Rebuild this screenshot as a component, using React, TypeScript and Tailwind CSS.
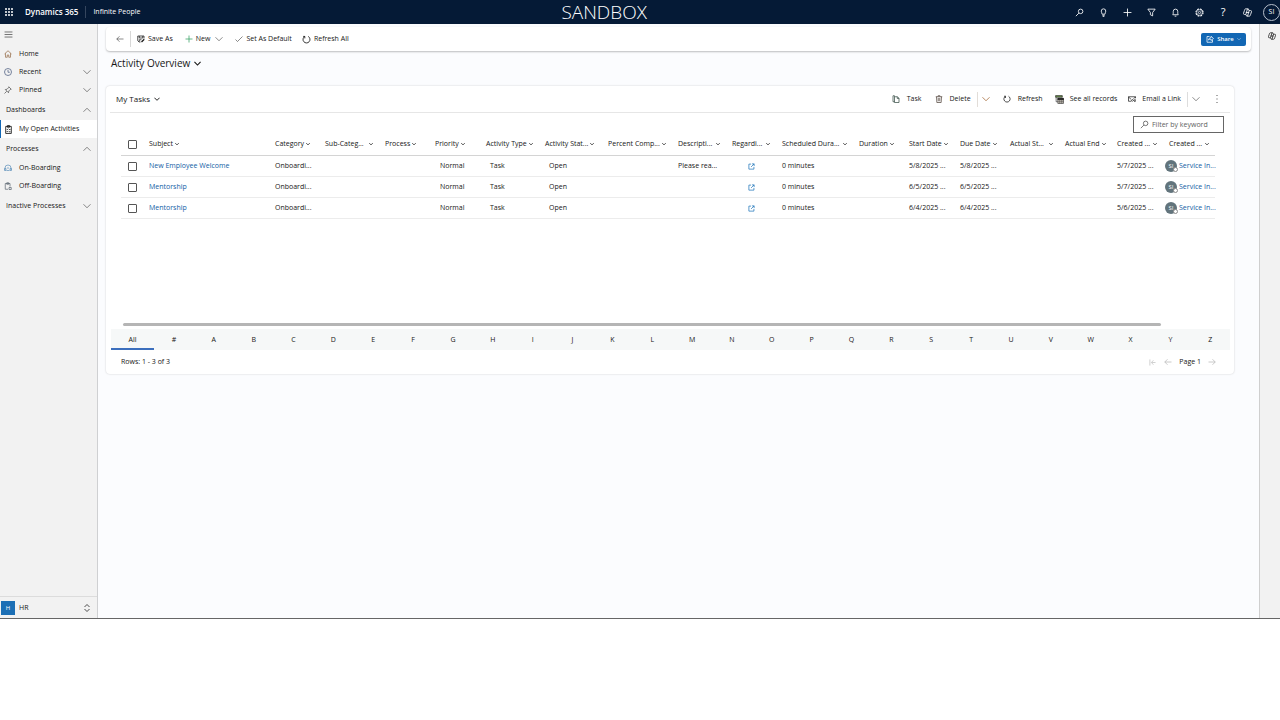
import React from 'react';

const icons: Record<string, string> = {
  search: 'M10 2a4 4 0 1 1 0 8a4 4 0 0 1 0-8M7 9l-5.500 5.500',
  bulb: 'M5.500 11C5.500 9 4 8 4 5.500a4 4 0 0 1 8 0C12 8 10.500 9 10.500 11zM6 13h4M6.500 15h3',
  plus: 'M8 1v14M1 8h14',
  filter: 'M1.500 2h13L10 8v6l-4-2V8z',
  bell: 'M3 12c1-1 1-2 1-6a4 4 0 0 1 8 0c0 4 0 5 1 6zM6.500 14.500h3',
  copilot: 'M5 1.500h4.500l1.500 3.500M5 1.500c-1.500 0-2 1-2.500 3L1 9c-.5 1.500 0 2.500 1.500 2.500H5L8 1.500M11 14.500H6.500L5 11.500M11 14.500c1.500 0 2-1 2.500-3L15 7c.5-1.500 0-2.500-1.500-2.500H11L8 14.500M5 8h6',
  back: 'M15 8H1.500M7 2.500L1.500 8L7 13.500',
  forward: 'M1 8h13.500M9 2.500L14.500 8L9 13.500',
  first: 'M2 1v14M15 8H6M10 3L5.500 8L10 13',
  check: 'M1 9l4 4L15 3',
  refresh: 'M5 2.500A6.200 6.200 0 1 0 11 2.500M5 2.500H2M5 2.500v3.500',
  down: 'M1 4.500l7 7l7-7',
  up: 'M1 11.500l7-7l7 7',
  menu: 'M1 3.500h14M1 8h14M1 12.500h14',
  home: 'M1 8L8 1.500L15 8M3 6.500V14.500h3.500V10h3v4.500H13V6.500',
  clock: 'M8 1a7 7 0 1 1 0 14A7 7 0 0 1 8 1M8 4v4.500h3.500',
  pin: 'M9.500 1.500l5 5l-2 .5l-3 3l-.5 3.500l-6.500-6.500L6 6.500l3-3zM5.500 10.500L1 15',
  clipboard: 'M3 2.500h10v12.500H3zM6 1h4v3H6zM5 7.500l1 1l1.500-2M9 8h2.500M5 11.500l1 1l1.500-2M9 12h2.500',
  board: 'M2 12V8a6 6 0 0 1 12 0v4M1 9h3v4H1zM12 9h3v4h-3zM5 13h6M6 8h4',
  offboard: 'M8 14.500H2.500V3H12v6M5.500 1.500h4v3h-4zM10 11h4.500v4H10z',
  trash: 'M1.500 3.500h13M6 3.500V1.500h4v2M3 3.500l.7 11.500h8.600L13 3.500M6.500 6v6.500M9.500 6v6.500',
  copy: 'M5 3.500V1.500H2v12h3M5 3.500h6l3 3V15H5zM10.500 3.500v3.500H14',
  popup: 'M7 2.500H2v11.500h11.500V9M9 2h5v5M14 2L7 9',
  share: 'M7 3H2v11.500h11V10M5 10c.5-3 2-4.500 5-4.500V2.500L15 7l-5 4V8.500c-2 0-3.500 0-5 1.500',
  sort: 'M3 6l5-5l5 5M3 10l5 5l5-5',
};

interface IconProps {
  name: string;
  className?: string;
  stroke?: number;
}

const Icon: React.FC<IconProps> = ({ name, className = 'size-2', stroke = 1.5 }) => (
  <svg viewBox="0 0 16 16" fill="none" stroke="currentColor" strokeWidth={stroke} className={`shrink-0 ${className}`} aria-hidden="true">
    <path d={icons[name]} />
  </svg>
);

const SaveIcon = () => (
  <svg viewBox="0 0 16 16" fill="none" stroke="currentColor" strokeWidth="1.500" className="size-2 shrink-0" aria-hidden="true">
    <path d="M7 14H4l-2.500-2.500V2H14v5M4.500 2v4h7V2M4.500 13V9.500H9" />
    <path d="M9 14l5.500-5.500" strokeWidth="2.500" />
  </svg>
);

const RecordsIcon = () => (
  <svg viewBox="0 0 16 16" fill="none" stroke="currentColor" strokeWidth="1" className="size-[9px] shrink-0" aria-hidden="true">
    <path d="M1 1h12v3H1z" fill="#6b8e4e" />
    <path d="M2 4v8h3" />
    <path d="M5 6h10v9H5z" fill="#e4ddd2" />
    <path d="M5 6h10v2.500H5z" fill="currentColor" />
    <path d="M5 12h10M8.500 8v7M12 8v7" strokeWidth="0.800" />
  </svg>
);

const MailIcon = () => (
  <svg viewBox="0 0 16 16" fill="none" stroke="currentColor" strokeWidth="1.400" className="size-2 shrink-0" aria-hidden="true">
    <path d="M6 12.500H1v-9h14v3M1 4l5 4.500M15 4l-4 3M9 13a1.800 1.800 0 0 1 0-4h1.500M12.500 9h1a1.800 1.800 0 0 1 0 4h-1.500M9.500 11h4" />
  </svg>
);

const GearIcon = () => (
  <svg viewBox="0 0 16 16" fill="none" stroke="currentColor" className="size-[9px]" aria-hidden="true">
    <circle cx="8" cy="8" r="6.300" strokeWidth="2" strokeDasharray="3.300 1.650" />
    <circle cx="8" cy="8" r="5" strokeWidth="1" />
    <circle cx="8" cy="8" r="2" strokeWidth="1.300" />
  </svg>
);

const topActions = [
  { label: 'Search', icon: 'search' },
  { label: 'Ideas', icon: 'bulb' },
  { label: 'Quick create', icon: 'plus' },
  { label: 'Advanced find', icon: 'filter' },
  { label: 'Notifications', icon: 'bell' },
  { label: 'Settings', icon: 'gear' },
  { label: 'Help', icon: 'help' },
  { label: 'Copilot', icon: 'copilot' },
];

const columns = [
  { label: 'Subject', width: 126 },
  { label: 'Category', width: 50 },
  { label: 'Sub-Categ...', width: 60, spread: true },
  { label: 'Process', width: 50 },
  { label: 'Priority', width: 51 },
  { label: 'Activity Type', width: 59 },
  { label: 'Activity Stat...', width: 63 },
  { label: 'Percent Comp...', width: 70, spread: true },
  { label: 'Descripti...', width: 54, spread: true },
  { label: 'Regardi...', width: 50, spread: true },
  { label: 'Scheduled Dura...', width: 77, spread: true },
  { label: 'Duration', width: 50 },
  { label: 'Start Date', width: 51 },
  { label: 'Due Date', width: 50 },
  { label: 'Actual St...', width: 55, spread: true },
  { label: 'Actual End', width: 52 },
  { label: 'Created ...', width: 52, spread: true },
  { label: 'Created ...', width: 52, spread: true },
];

const rows = [
  { subject: 'New Employee Welcome', description: 'Please rea...', date: '5/8/2025 ...', created: '5/7/2025 ...' },
  { subject: 'Mentorship', description: '', date: '6/5/2025 ...', created: '5/7/2025 ...' },
  { subject: 'Mentorship', description: '', date: '6/4/2025 ...', created: '5/6/2025 ...' },
];

const TopBar = () => (
  <header className="grid h-6 grid-cols-[47fr_auto_53fr] items-center bg-[#051a36] text-white">
    <div className="flex items-center">
      <button aria-label="App launcher" className="ml-1 flex w-[11px] justify-center">
        <svg viewBox="0 0 9 9" fill="currentColor" className="size-[9px]">
          {[1, 4, 7].map((y) => [1, 4, 7].map((x) => <rect key={`${x}${y}`} x={x - 1} y={y - 1} width="2" height="2" rx="1" />))}
        </svg>
      </button>
      <span className="ml-[10px] text-[8px] font-semibold">Dynamics 365</span>
      <span className="mx-[7px] h-3 w-px bg-[#35465e]" />
      <span className="text-[7px]">Infinite People</span>
    </div>
    <div className="text-[19px] font-light">SANDBOX</div>
    <div className="flex items-center justify-end">
      {topActions.map(({ label, icon }) => (
        <button key={label} aria-label={label} className="flex w-6 justify-center">
          {icon === 'gear' ? <GearIcon /> : icon === 'help' ? <span className="text-[11px]">?</span> : <Icon name={icon} className="size-[9px]" />}
        </button>
      ))}
      <button className="ml-1 flex size-[17px] items-center justify-center rounded-full border border-[#b8c0cc] text-[7px]">SI</button>
    </div>
  </header>
);

interface NavItemProps {
  label: string;
  icon: string;
  color?: string;
  expand?: boolean;
}

const NavItem: React.FC<NavItemProps> = ({ label, icon, color = 'text-[#555]', expand }) => (
  <button className="flex h-[18px] w-full items-center pl-1 pr-[6px]">
    <Icon name={icon} className={`size-2 ${color}`} />
    <span className="ml-[7px] flex-1 text-left">{label}</span>
    {expand && <Icon name="down" className="size-2" stroke={1} />}
  </button>
);

const NavGroup = ({ label, open }: { label: string; open?: boolean }) => (
  <button className="flex h-[21px] w-full items-center justify-between pl-[6px] pr-[6px]">
    {label}
    <Icon name={open ? 'up' : 'down'} stroke={1} />
  </button>
);

const Sidebar = () => (
  <nav className="flex w-[98px] shrink-0 flex-col border-r border-[#cfd0d2] bg-[#f2f2f2]">
    <button aria-label="Collapse menu" className="flex h-[21px] items-center pl-1">
      <Icon name="menu" className="size-[9px]" stroke={1} />
    </button>
    <NavItem label="Home" icon="home" color="text-[#9a7350]" />
    <NavItem label="Recent" icon="clock" color="text-[#4d5f80]" expand />
    <NavItem label="Pinned" icon="pin" expand />
    <NavGroup label="Dashboards" open />
    <a href="#activities" className="flex h-[18px] items-center border-l border-[#1267b4] bg-white pl-[3px]">
      <Icon name="clipboard" className="size-[9px]" />
      <span className="ml-[6px]">My Open Activities</span>
    </a>
    <NavGroup label="Processes" open />
    <NavItem label="On-Boarding" icon="board" color="text-[#6596bd]" />
    <NavItem label="Off-Boarding" icon="offboard" color="text-[#626b75]" />
    <NavGroup label="Inactive Processes" />
    <button className="mt-auto flex h-[22px] items-center border-t border-[#dcdcdc] pl-px pr-[6px]">
      <span className="flex size-[14px] items-center justify-center bg-[#1c6fb5] text-[6px] text-white">H</span>
      <span className="ml-1 flex-1 text-left">HR</span>
      <Icon name="sort" />
    </button>
  </nav>
);

const CommandBar = () => (
  <div className="mt-[3px] mr-2 flex h-6 items-center rounded-sm bg-white shadow-[0_1px_2px_rgba(0,0,0,0.250)]">
    <button aria-label="Back" className="ml-[10px]"><Icon name="back" stroke={1} /></button>
    <span className="mx-[6px] h-4 w-px bg-[#d8d8d8]" />
    <button className="flex items-center gap-[3px]"><SaveIcon />Save As</button>
    <button className="ml-3 flex items-center gap-[3px]">
      <Icon name="plus" className="size-2 text-[#37a063]" />New
      <Icon name="down" className="ml-[2px] size-2" stroke={1} />
    </button>
    <button className="ml-3 flex items-center gap-[3px]"><Icon name="check" stroke={1} />Set As Default</button>
    <button className="ml-[10px] flex items-center gap-[3px]"><Icon name="refresh" className="size-[9px]" />Refresh All</button>
    <button className="ml-auto mr-[5px] flex h-[13px] w-[45px] items-center justify-center gap-[3px] rounded-xs bg-[#1267b4] text-[6px] font-semibold text-white">
      <Icon name="share" />Share<Icon name="down" className="size-1" />
    </button>
  </div>
);

const GridToolbar = () => (
  <div className="mx-1 flex h-[27px] items-center border-b border-[#e6e6e6]">
    <button className="ml-[6px] flex items-center gap-1 text-[8px]">
      My Tasks <Icon name="down" className="size-[6px]" stroke={2.5} />
    </button>
    <button className="ml-auto flex items-center gap-[7px]"><Icon name="copy" className="size-2 text-[#3b5249]" />Task</button>
    <button className="ml-[13px] flex items-center gap-[7px]"><Icon name="trash" className="size-2 text-[#554a40]" />Delete</button>
    <span className="ml-[6px] h-[15px] w-px bg-[#e2ddd8]" />
    <button aria-label="More delete options" className="ml-1"><Icon name="down" className="size-2 text-[#a0622d]" /></button>
    <button className="ml-[13px] flex items-center gap-[7px]"><Icon name="refresh" />Refresh</button>
    <button className="ml-3 flex items-center gap-[6px]"><RecordsIcon />See all records</button>
    <button className="ml-[11px] flex items-center gap-[6px]"><MailIcon />Email a Link</button>
    <span className="ml-[6px] h-[15px] w-px bg-[#ddd]" />
    <button aria-label="More link options" className="ml-1"><Icon name="down" stroke={1} /></button>
    <button aria-label="More commands" className="ml-[15px] mr-[11px]">
      <svg viewBox="0 0 4 10" fill="#555" className="h-[10px] w-1" aria-hidden="true">
        <path d="M1.500 1h1v1h-1zM1.500 4.500h1v1h-1zM1.500 8h1v1h-1z" />
      </svg>
    </button>
  </div>
);

const Checkbox = ({ label }: { label: string }) => (
  <input type="checkbox" aria-label={label} className="block size-[9px] appearance-none rounded-[1px] border border-[#555] bg-white" />
);

const TasksTable = () => (
  <table className="mt-px w-full table-fixed border-collapse whitespace-nowrap text-left [&_td]:pt-px">
    <colgroup>
      <col style={{ width: 22 }} />
      {columns.map(({ width }, i) => <col key={i} style={{ width }} />)}
    </colgroup>
    <thead>
      <tr className="h-[21px] border-b border-[#d4d4d4]">
        <th className="pl-[7px]"><Checkbox label="Select all" /></th>
        {columns.map(({ label, spread }, i) => (
          <th key={i} className="pl-[6px] font-medium">
            <button className={`flex items-center gap-[2px] ${spread ? 'w-full justify-between pr-[6px]' : ''}`}>
              {label}<Icon name="down" className="size-1" stroke={3} />
            </button>
          </th>
        ))}
      </tr>
    </thead>
    <tbody>
      {rows.map((row, i) => (
        <tr key={i} className="h-[21px] border-b border-[#ececec]">
          <td className="pl-[7px]"><Checkbox label={`Select row ${i + 1}`} /></td>
          <td className="pl-[6px]"><a href="#task" className="text-[#1260a5]">{row.subject}</a></td>
          <td className="pl-[6px]">Onboardi...</td>
          <td />
          <td />
          <td className="pl-[11px]">Normal</td>
          <td className="pl-[10px]">Task</td>
          <td className="pl-[10px]">Open</td>
          <td />
          <td className="pl-[6px]">{row.description}</td>
          <td><a href="#regarding" aria-label="Open record" className="flex justify-center text-[#1971b8]"><Icon name="popup" className="size-[7px]" stroke={1.6} /></a></td>
          <td className="pl-[6px]">0 minutes</td>
          <td />
          <td className="pl-[6px]">{row.date}</td>
          <td className="pl-[6px]">{row.date}</td>
          <td />
          <td />
          <td className="pl-[6px]">{row.created}</td>
          <td className="pl-[2px]">
            <a href="#user" className="flex items-center gap-[2px] text-[#1260a5]">
              <span className="relative flex size-3 shrink-0 items-center justify-center rounded-full bg-[#62747c] text-[6px] text-white">
                SI
                <span className="absolute -right-px bottom-0 size-[5px] rounded-full border border-[#8b8b8b] bg-white" />
              </span>
              Service In...
            </a>
          </td>
        </tr>
      ))}
    </tbody>
  </table>
);

const JumpBar = () => (
  <div className="ml-[5px] mr-1 flex h-[21px] bg-[#f6f8f8]">
    <button className="w-[43px] border-b-2 border-[#3c6fbd] pt-[2px]">All</button>
    {'#ABCDEFGHIJKLMNOPQRSTUVWXYZ'.split('').map((letter) => (
      <button key={letter} className="flex-1">{letter}</button>
    ))}
  </div>
);

const App: React.FC = () => {
  return (
    <div className="min-h-screen bg-white font-['Open_Sans',sans-serif] text-[7px] leading-[10px] text-[#161616]">
      <div className="flex min-h-[86vh] flex-col border-b border-[#666]">
        <TopBar />
        <div className="flex flex-1">
          <Sidebar />
          <main className="min-w-0 flex-1 bg-[#fbfcfe] pl-2">
            <CommandBar />
            <h1 className="ml-[5px] mt-[6px] text-[10px] leading-3 font-medium">
              <button className="flex items-center gap-1">Activity Overview <Icon name="down" className="size-[7px]" stroke={2.5} /></button>
            </h1>
            {/* Tasks grid */}
            <section className="mt-[17px] mr-[25px] rounded-sm bg-white shadow-[0_0_2px_rgba(0,0,0,0.200)]">
              <GridToolbar />
              <div className="flex justify-end pt-[3px] pr-[10px]">
                <label className="flex h-[17px] w-[91px] items-center gap-[3px] border border-[#666] px-[6px]">
                  <Icon name="search" className="size-[9px]" stroke={1} />
                  <input type="text" aria-label="Filter by keyword" placeholder="Filter by keyword" className="min-w-0 flex-1 outline-none placeholder:text-[#616161]" />
                </label>
              </div>
              <div className="flow-root min-h-[190px] pl-[15px] pr-[19px]">
                <TasksTable />
              </div>
              <div className="mb-[3px] ml-[17px] mr-[73px] h-[3px] rounded-full bg-[#b5b5b5]" />
              <JumpBar />
              {/* Paging */}
              <footer className="flex h-6 items-center pl-[15px] pr-[18px]">
                <span>Rows: 1 - 3 of 3</span>
                <button aria-label="First page" className="ml-auto text-[#b8b8b8]"><Icon name="first" className="size-[7px]" /></button>
                <button aria-label="Previous page" className="ml-2 text-[#b8b8b8]"><Icon name="back" /></button>
                <span className="mx-[7px]">Page 1</span>
                <button aria-label="Next page" className="text-[#b8b8b8]"><Icon name="forward" /></button>
              </footer>
            </section>
          </main>
          <aside className="flex w-[21px] shrink-0 items-start justify-center border-l border-[#cfcfcf] bg-[#f2f2f2] pt-2">
            <button aria-label="Copilot pane"><Icon name="copilot" className="ml-[3px] size-2" /></button>
          </aside>
        </div>
      </div>
    </div>
  );
};

export default App;
